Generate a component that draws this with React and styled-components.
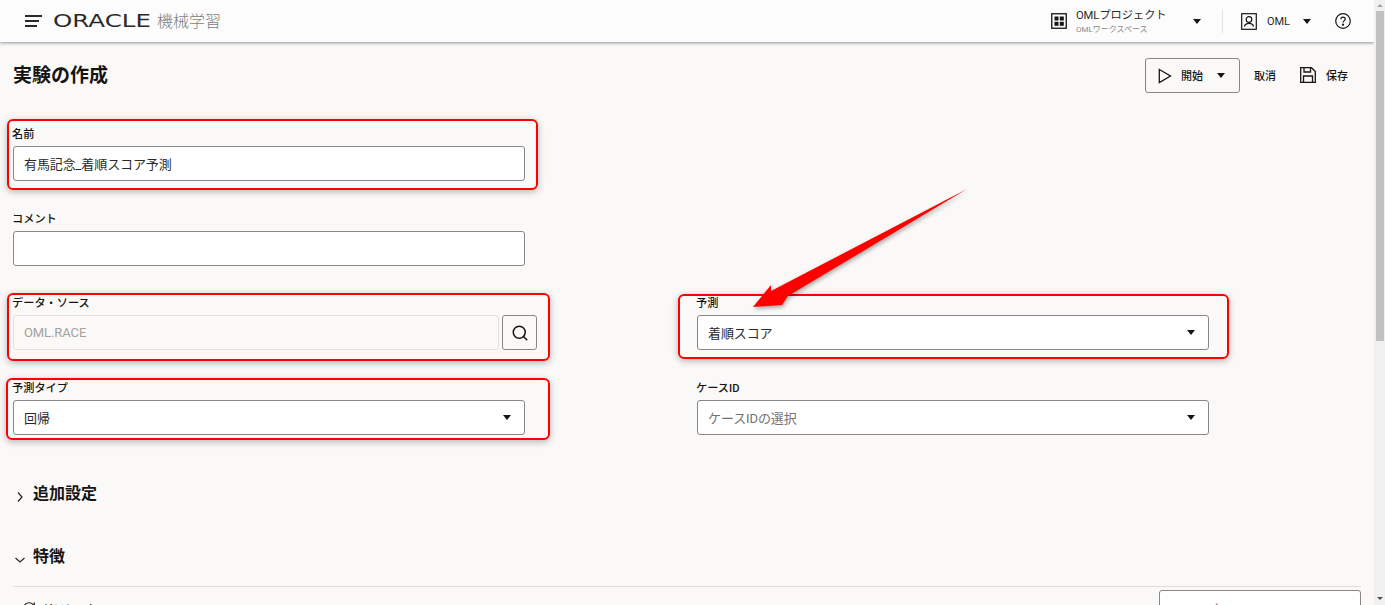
import React from "react";
import styled, { createGlobalStyle } from "styled-components";
import { RefreshCw, Search } from "lucide-react";

const GlobalStyle = createGlobalStyle`
  html, body {
    margin: 0;
    height: 605px;
    overflow: hidden;
    background: #faf9f7;
  }
  * { box-sizing: border-box; }
`;

const Page = styled.div`
  display: flex;
  width: 1385px;
  height: 605px;
  overflow: hidden;
  font-family: Roboto, "Noto Sans CJK JP", sans-serif;
  color: #161513;
`;

const Main = styled.div`
  position: relative;
  width: 1374px;
  height: 605px;
  overflow: hidden;
`;

const Header = styled.header`
  display: flex;
  align-items: center;
  height: 42px;
  padding: 0 23px 0 25px;
  background: #fcfcfc;
  box-shadow: 0 1px 3px rgba(70, 75, 100, 0.6);
`;

const Menu = styled.div`
  display: flex;
  flex-direction: column;
  gap: 3.5px;
  width: 18px;
  margin-right: 12px;
`;

const MenuLine = styled.span`
  height: 1.5px;
  width: ${(p) => p.$w}px;
  background: #2b2a28;
`;

const ProductName = styled.span`
  margin: 0 0 3px 4px;
  font-size: 16px;
  font-weight: 300;
  color: #7f7d7a;
`;

const Spacer = styled.div`
  flex: 1;
`;

const ProjectName = styled.div`
  display: flex;
  flex-direction: column;
  width: 108px;
  margin: 3px 0 0 9px;
`;

const ProjectTitle = styled.span`
  font-size: 11.2px;
  line-height: 14px;
  color: #2b2a28;
`;

const ProjectSub = styled.span`
  margin-top: 1px;
  font-size: 8px;
  line-height: 12px;
  color: #8d8b88;
`;

const Caret = styled.span`
  flex: none;
  width: 0;
  height: 0;
  border-left: 4.5px solid transparent;
  border-right: 4.5px solid transparent;
  border-top: 5px solid #161513;
  margin-left: ${(p) => p.$ml || 0}px;
`;

const HeaderDivider = styled.span`
  width: 1px;
  height: 24px;
  margin: 0 18px 0 21px;
  background: #e4e2df;
`;

const UserName = styled.span`
  font-size: 11px;
  margin: 0 13px 0 10px;
  color: #2b2a28;
`;

const HelpIcon = styled.svg`
  margin-left: 24px;
`;

const TitleRow = styled.div`
  display: flex;
  align-items: center;
  height: 51px;
  margin-top: 8px;
  padding: 0 26px 0 13px;
`;

const PageTitle = styled.h1`
  margin: 0 0 5px;
  font-size: 19px;
  font-weight: 700;
`;

const StartButton = styled.button`
  display: flex;
  align-items: center;
  width: 95px;
  height: 35px;
  padding: 0 0 0 12px;
  background: transparent;
  border: 1px solid #8a8886;
  border-radius: 3px;
  font: inherit;
  font-size: 11px;
  font-weight: 500;
  color: #161513;
`;

const StartLabel = styled.span`
  margin: 0 0 2px 9px;
`;

const TextAction = styled.span`
  display: flex;
  align-items: center;
  gap: 10px;
  margin-left: ${(p) => p.$ml}px;
  margin-bottom: 2px;
  font-size: 11px;
  font-weight: 500;
`;

const FormGrid = styled.div`
  display: grid;
  grid-template-columns: 512px 512px;
  column-gap: 172px;
  grid-auto-rows: 84.5px;
  margin-top: 18px;
  padding-left: 13px;
`;

const Field = styled.div`
  position: relative;
  grid-column: ${(p) => p.$col || "auto"};
  display: flex;
  flex-direction: column;
  justify-content: flex-end;
  height: 62px;
`;

const Highlight = styled.span`
  position: absolute;
  top: ${(p) => p.$t}px;
  bottom: ${(p) => p.$b}px;
  left: ${(p) => p.$l}px;
  right: ${(p) => p.$r}px;
  border: 2px solid #ff0000;
  border-radius: 6px;
  box-shadow: 0 2px 7px rgba(0, 0, 0, 0.28);
  pointer-events: none;
`;

const Label = styled.label`
  display: block;
  margin-left: -1px;
  margin-bottom: 4px;
  font-size: 11.2px;
  line-height: 14px;
  font-weight: 500;
`;

const InputRow = styled.div`
  display: flex;
  gap: 3px;
  width: 524px;
`;

const Input = styled.div`
  flex: ${(p) => (p.$grow ? 1 : "none")};
  display: flex;
  align-items: center;
  justify-content: space-between;
  height: 35px;
  padding: 0 13px 0 10px;
  background: ${(p) => (p.$disabled ? "#faf9f7" : "#fff")};
  border: 1px solid ${(p) => (p.$disabled ? "#e4e2df" : "#8a8886")};
  border-radius: 3px;
  font-size: 13px;
  letter-spacing: -0.1px;
  color: ${(p) => (p.$disabled ? "#a3a19e" : p.$placeholder ? "#75736f" : "#2b2a28")};
`;

const SearchButton = styled.div`
  display: flex;
  align-items: center;
  justify-content: center;
  width: 35px;
  height: 35px;
  border: 1px solid #8a8886;
  border-radius: 3px;
`;

const Section = styled.div`
  display: flex;
  align-items: center;
  height: 30px;
  margin-top: ${(p) => p.$mt}px;
  padding-left: 15px;
  font-size: 16px;
  font-weight: 700;
`;

const SectionTitle = styled.span`
  margin-left: 8px;
  position: relative;
  top: -5px;
`;

const Divider = styled.div`
  height: 1px;
  margin: 11px 13px 0 13px;
  background: #dfddda;
`;

const FeatureRow = styled.div`
  display: flex;
  justify-content: space-between;
  padding: 3px 13px 0 22px;
`;

const RefreshButton = styled.div`
  display: flex;
  align-items: center;
  gap: 7px;
  height: 35px;
  font-size: 11px;
  font-weight: 500;
`;

const FilterBox = styled.div`
  width: 202px;
  height: 35px;
  padding: 8px 12px;
  background: #fff;
  border: 1px solid #8a8886;
  border-radius: 3px;
  font-size: 13px;
  color: #75736f;
`;

const ArrowOverlay = styled.svg`
  position: absolute;
  left: 0;
  top: 0;
  filter: drop-shadow(1px 2px 2px rgba(0, 0, 0, 0.35));
  pointer-events: none;
`;

const Scrollbar = styled.div`
  display: flex;
  flex-direction: column;
  width: 11px;
  height: 605px;
  padding: 0 1px 0 2px;
  background: #f1f1f1;
`;

const ScrollArrow = styled.span`
  width: 0;
  height: 0;
  margin: 4px auto 0;
  border-left: 3px solid transparent;
  border-right: 3px solid transparent;
  ${(p) =>
    p.$up
      ? "border-bottom: 3px solid #a3a3a3;"
      : "border-top: 3px solid #505050; margin: auto auto 5px;"}
`;

const ScrollThumb = styled.div`
  width: 100%;
  height: 330px;
  margin-top: 4px;
  background: #c1c1c1;
`;

const LogoWrap = styled.svg`
  margin-left: -2px;
`;

const Logo = () => (
  <LogoWrap width="100" height="16" viewBox="0 0 100 16">
    <text
      x="0"
      y="13.6"
      fontFamily="DejaVu Sans, sans-serif"
      fontSize="17"
      fill="#2b2a28"
      textLength="98"
      lengthAdjust="spacingAndGlyphs"
    >
      ORACLE
    </text>
  </LogoWrap>
);

const GridIcon = () => (
  <svg width="16" height="16" viewBox="0 0 16 16" fill="none">
    <rect x="0.75" y="0.75" width="14.5" height="14.5" stroke="#161513" strokeWidth="1.3" />
    <rect x="3.5" y="3.5" width="4" height="4" fill="#161513" />
    <rect x="8.8" y="3.5" width="4" height="4" fill="#161513" />
    <rect x="3.5" y="8.8" width="4" height="4" fill="#161513" />
    <rect x="8.8" y="8.8" width="4" height="4" fill="#161513" />
  </svg>
);

const UserIcon = () => (
  <svg width="16" height="17" viewBox="0 0 16 17" fill="none" stroke="#161513" strokeWidth="1.2">
    <rect x="0.7" y="0.7" width="14.6" height="15.6" />
    <circle cx="8" cy="6.5" r="2.8" />
    <path d="M3.4 13.5c.5-2.2 2.3-3.2 4.6-3.2s4.1 1 4.6 3.2" />
  </svg>
);

const PlayIcon = () => (
  <svg width="14" height="16" viewBox="0 0 14 16" fill="none">
    <path d="M1.3 1.5 L12.5 8 L1.3 14.5 Z" stroke="#161513" strokeWidth="1.3" />
  </svg>
);

const SaveIcon = () => (
  <svg width="16" height="16" viewBox="0 0 16 16" fill="none" stroke="#161513" strokeWidth="1.3">
    <path d="M0.7 0.7 H11.5 L15.3 4.5 V15.3 H0.7 Z" />
    <path d="M4 0.7 V5 H10.5 V0.7" />
    <path d="M3.5 15.3 V9 H12.5 V15.3" />
  </svg>
);

const Chevron = ({ open }) => (
  <svg width="10" height="10" viewBox="0 0 10 10" fill="none" stroke="#2b2a28" strokeWidth="1.3">
    {open ? <path d="M0.5 3 L5 7 L9.5 3" /> : <path d="M3 0.5 L7 5 L3 9.5" />}
  </svg>
);

const App = () => {
  return (
    <Page>
      <GlobalStyle />
      <Main>
        <Header>
          <Menu>
            <MenuLine $w={17} />
            <MenuLine $w={14} />
            <MenuLine $w={12} />
          </Menu>
          <Logo />
          <ProductName>機械学習</ProductName>
          <Spacer />
          <GridIcon />
          <ProjectName>
            <ProjectTitle>OMLプロジェクト</ProjectTitle>
            <ProjectSub>OMLワークスペース</ProjectSub>
          </ProjectName>
          <Caret $ml={9} />
          <HeaderDivider />
          <UserIcon />
          <UserName>OML</UserName>
          <Caret />
          <HelpIcon width="16" height="16" viewBox="0 0 16 16" fill="none" stroke="#161513" strokeWidth="1.2">
            <circle cx="8" cy="8" r="7.3" />
            <path d="M5.8 6.2c0-1.3 1-2.1 2.2-2.1s2.2.8 2.2 2c0 1.8-2.2 1.7-2.2 3.5" />
            <circle cx="8" cy="11.7" r="0.5" fill="#161513" />
          </HelpIcon>
        </Header>

        <TitleRow>
          <PageTitle>実験の作成</PageTitle>
          <Spacer />
          <StartButton>
            <PlayIcon />
            <StartLabel>開始</StartLabel>
            <Caret $ml={14} />
          </StartButton>
          <TextAction $ml={14}>取消</TextAction>
          <TextAction $ml={24}>
            <SaveIcon />
            保存
          </TextAction>
        </TitleRow>

        <FormGrid>
          <Field $col="1">
            <Highlight $t={0} $b={-9} $l={-6} $r={-13} />
            <Label>名前</Label>
            <Input>有馬記念_着順スコア予測</Input>
          </Field>
          <Field $col="1">
            <Label>コメント</Label>
            <Input />
          </Field>
          <Field $col="1">
            <Highlight $t={5} $b={-11} $l={-6} $r={-25} />
            <Label>データ・ソース</Label>
            <InputRow>
              <Input $grow $disabled>OML.RACE</Input>
              <SearchButton>
                <Search size={18} color="#161513" strokeWidth={2} />
              </SearchButton>
            </InputRow>
          </Field>
          <Field>
            <Highlight $t={6} $b={-9} $l={-19} $r={-20} />
            <Label>予測</Label>
            <Input>
              着順スコア
              <Caret />
            </Input>
          </Field>
          <Field>
            <Highlight $t={5} $b={-5} $l={-7} $r={-25} />
            <Label>予測タイプ</Label>
            <Input>
              回帰
              <Caret />
            </Input>
          </Field>
          <Field>
            <Label>ケースID</Label>
            <Input $placeholder>
              ケースIDの選択
              <Caret />
            </Input>
          </Field>
        </FormGrid>

        <Section $mt={25}>
          <Chevron />
          <SectionTitle>追加設定</SectionTitle>
        </Section>
        <Section $mt={33}>
          <Chevron open />
          <SectionTitle>特徴</SectionTitle>
        </Section>
        <Divider />
        <FeatureRow>
          <RefreshButton>
            <RefreshCw size={14} color="#161513" />
            リフレッシュ
          </RefreshButton>
          <FilterBox>フィルタ</FilterBox>
        </FeatureRow>

        <ArrowOverlay width="1374" height="605" viewBox="0 0 1374 605">
          <path d="M753 307 L771 285 L771 291 L967 189 L788 296 L782 305 Z" fill="#ff0000" />
        </ArrowOverlay>
      </Main>
      <Scrollbar>
        <ScrollArrow $up />
        <ScrollThumb />
        <ScrollArrow />
      </Scrollbar>
    </Page>
  );
};

export default App;
